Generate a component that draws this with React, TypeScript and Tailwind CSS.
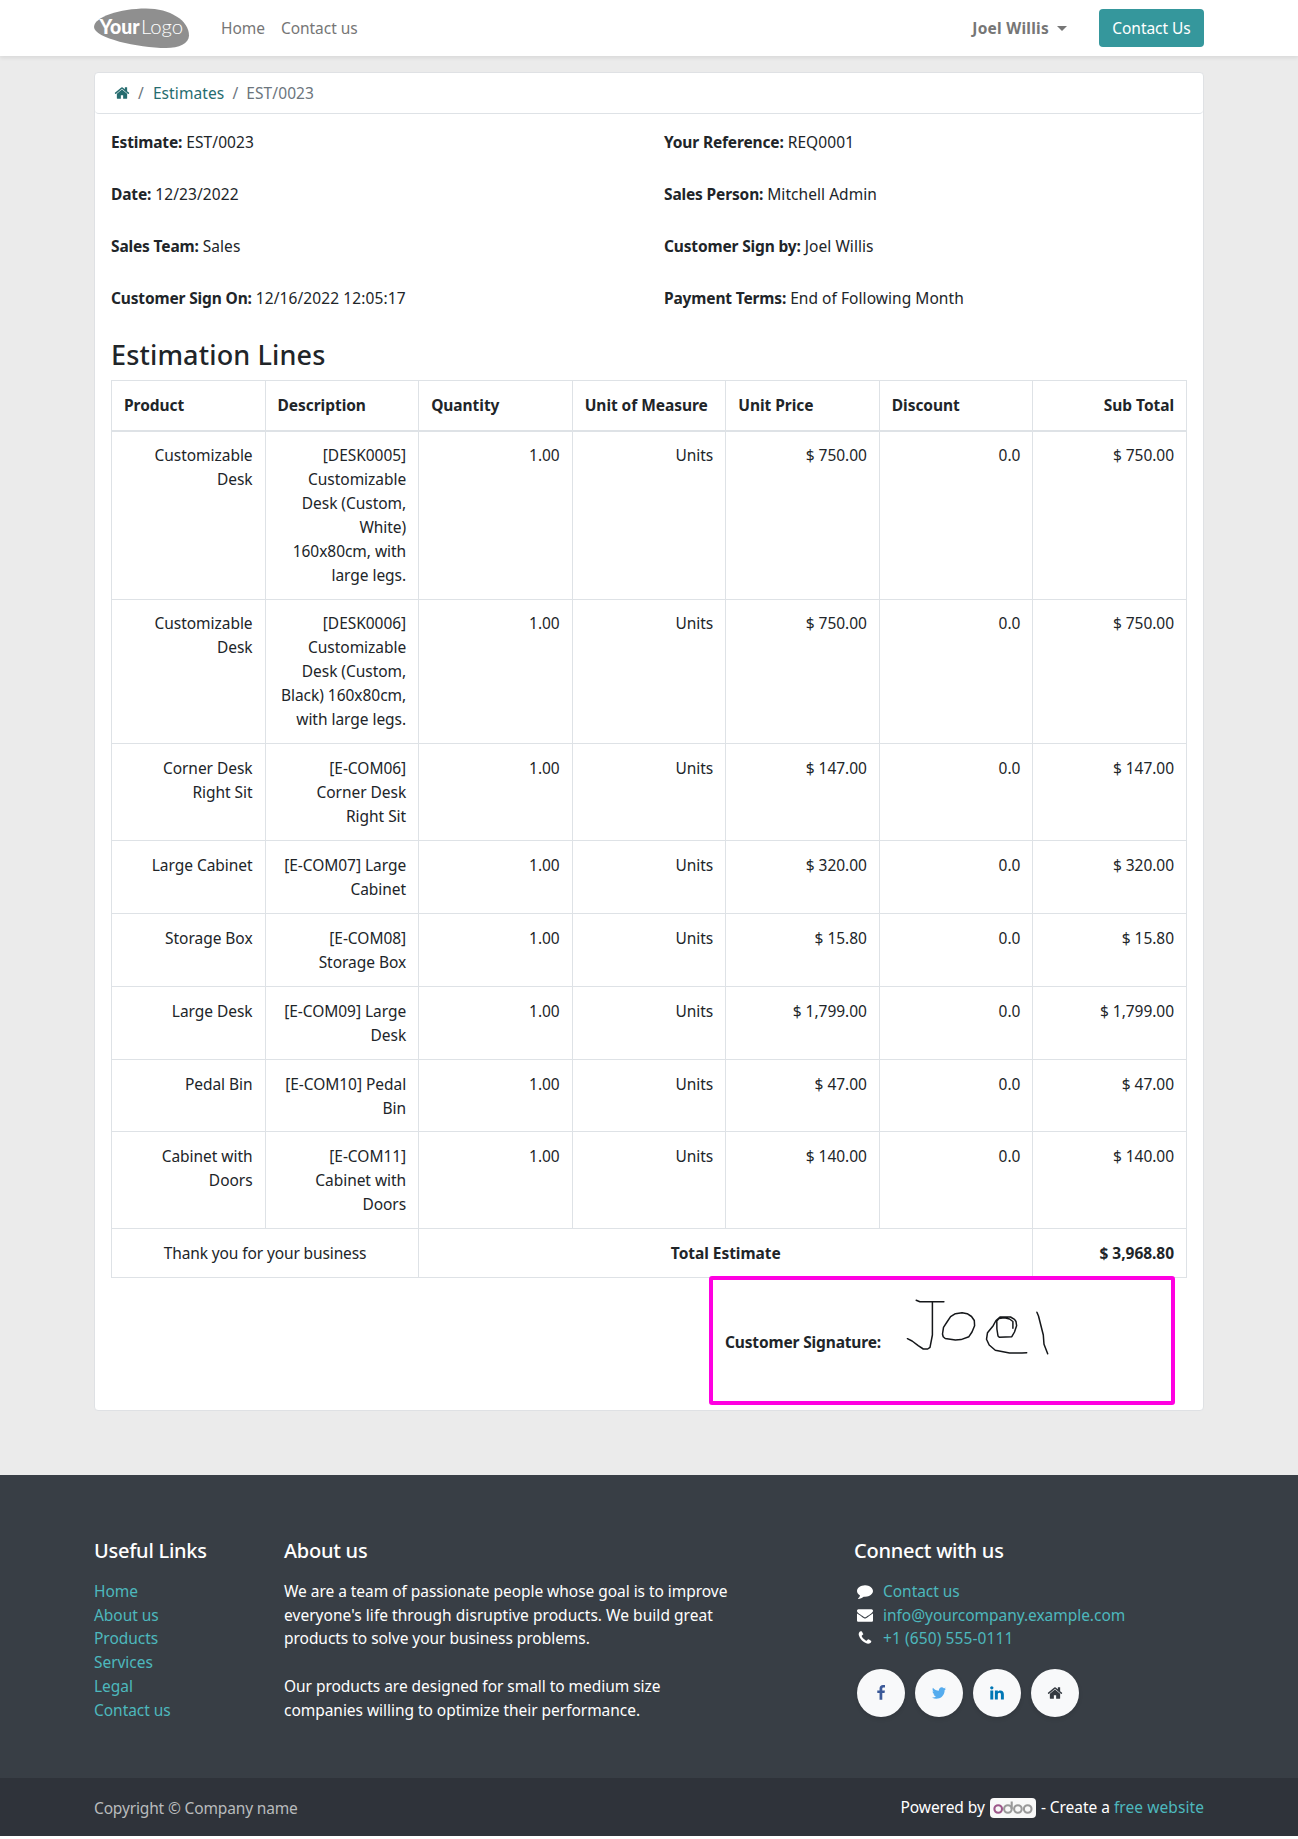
import React from "react";

const icons = {
  home: "M1472 992v480q0 26-19 45t-45 19h-384v-384h-256v384h-384q-26 0-45-19t-19-45v-480q0-1 .5-3t.5-3l575-474 575 474q1 2 1 6zm223-69l-62 74q-8 9-21 11h-3q-13 0-21-7l-692-577-692 577q-12 8-24 7-13-2-21-11l-62-74q-8-10-7-23.5t11-21.5l719-599q32-26 76-26t76 26l244 204v-195q0-14 9-23t23-9h192q14 0 23 9t9 23v408l219 182q10 8 11 21.5t-7 23.5z",
  comment: "M1792 896q0 174-120 321.5t-326 233-450 85.5q-70 0-145-8-198 175-460 242-49 14-114 22-17 2-30.5-9t-17.5-29v-1q-3-4-.5-12t2-10 4.5-9.5l6-9 7-8.5 8-9q7-8 31-34.5t34.5-38 31-39.5 32.5-51 27-59 26-76q-157-89-247.5-220t-90.5-281q0-130 71-248.5t191-204.5 286-136.5 348-50.5q244 0 450 85.5t326 233 120 321.5z",
  envelope: "M1792 710v794q0 66-47 113t-113 47h-1472q-66 0-113-47t-47-113v-794q44 49 101 87 362 246 497 345 57 42 92.5 65.5t94.5 48 110 24.5h2q51 0 110-24.5t94.5-48 92.5-65.5q170-123 498-345 57-39 100-87zm0-294q0 79-49 151t-122 123q-376 261-468 325-10 7-42.5 30.5t-54 38-52 32.5-57.5 27-50 9h-2q-23 0-50-9t-57.5-27-52-32.5-54-38-42.5-30.5q-91-64-262-182.5t-205-142.5q-62-42-117-115.5t-55-136.5q0-78 41.5-130t118.5-52h1472q65 0 112.5 47t47.5 113z",
  phone: "M1600 1240q0 27-10 70.5t-21 68.5q-21 50-122 106-94 51-186 51-27 0-52.500-3.500t-57.500-12.500-47.500-14.500-55.500-20.500-49-18q-98-35-175-83-128-79-264.500-215.500t-215.500-264.500q-48-77-83-175-3-9-18-49t-20.500-55.500-14.500-47.500-12.500-57.500-3.500-52.500q0-92 51-186 56-101 106-122 25-11 68.500-21t70.500-10q14 0 21 3 18 6 53 76 11 19 30 54t35 63.500 31 53.500q3 4 17.500 25t21.500 35.500 7 28.500q0 20-28.500 50t-62 55-62 53-28.500 46q0 9 5 22.500t8.500 20.500 14 24 11.500 19q76 137 174 235t235 174q2 1 19 11.500t24 14 20.500 8.500 22.500 5q18 0 46-28.500t53-62 55-62 50-28.500q14 0 28.500 7t35.500 21.500 25 17.500q25 15 53.500 31t63.500 35 54 30q70 35 76 53 3 7 3 21z",
  facebook: "M1343 12v264h-157q-86 0-116 36t-30 108v189h293l-39 296h-254v759h-306v-759h-255v-296h255v-218q0-186 104-288.5t277-102.5q147 0 228 12z",
  twitter: "M1684 408q-67 98-162 167 1 14 1 42 0 130-38 259.5t-115.5 248.5-184.5 210.5-258 146-323 54.5q-271 0-496-145 35 4 78 4 225 0 401-138-105-2-188-64.5t-114-159.5q33 5 61 5 43 0 85-11-112-23-185.5-111.5t-73.5-205.5v-4q68 38 146 41-66-44-105-115t-39-154q0-88 44-163 121 149 294.500 238.500t371.500 99.500q-8-38-8-74 0-134 94.500-228.500t228.500-94.500q140 0 236 102 109-21 205-78-37 115-142 178 93-10 186-50z",
  linkedin: "M477 625v991h-330v-991h330zm21-306q1 73-50.5 122t-135.5 49h-2q-82 0-132-49t-50-122q0-74 51.5-122.5t134.5-48.5 133 48.5 51 122.5zm1166 729v568h-329v-530q0-105-40.5-164.5t-126.5-59.5q-63 0-105.5 34.5t-63.5 85.5q-11 30-11 81v553h-329q2-399 2-647t-1-296l-1-48h329v144h-2q20-32 41-56t56.5-52 87-43.5 114.5-15.5q171 0 275 113.5t104 332.5z",
};

function Icon({ name, className = "" }: { name: keyof typeof icons; className?: string }) {
  return (
    <svg viewBox="0 0 1792 1792" fill="currentColor" className={`size-4 shrink-0 ${className}`}>
      <path d={icons[name]} />
    </svg>
  );
}

const rows = [
  { h: "h-[169px] [&>td]:pt-[11px]", p: ["Customizable", "Desk"], d: ["[DESK0005]", "Customizable", "Desk (Custom,", "White)", "160x80cm, with", "large legs."], price: "$ 750.00" },
  { h: "h-[144px] [&>td]:pt-[11px]", p: ["Customizable", "Desk"], d: ["[DESK0006]", "Customizable", "Desk (Custom,", "Black) 160x80cm,", "with large legs."], price: "$ 750.00" },
  { h: "h-[97px] [&>td]:pt-3", p: ["Corner Desk", "Right Sit"], d: ["[E-COM06]", "Corner Desk", "Right Sit"], price: "$ 147.00" },
  { h: "h-[73px] [&>td]:pt-3", p: ["Large Cabinet"], d: ["[E-COM07] Large", "Cabinet"], price: "$ 320.00" },
  { h: "h-[73px] [&>td]:pt-3", p: ["Storage Box"], d: ["[E-COM08]", "Storage Box"], price: "$ 15.80" },
  { h: "h-[73px] [&>td]:pt-3", p: ["Large Desk"], d: ["[E-COM09] Large", "Desk"], price: "$ 1,799.00" },
  { h: "h-[72px] [&>td]:pt-3", p: ["Pedal Bin"], d: ["[E-COM10] Pedal", "Bin"], price: "$ 47.00" },
  { h: "h-[97px] [&>td]:pt-3", p: ["Cabinet with", "Doors"], d: ["[E-COM11]", "Cabinet with", "Doors"], price: "$ 140.00" },
];
const heads = ["Product", "Description", "Quantity", "Unit of Measure", "Unit Price", "Discount", "Sub Total"];
const info = [
  ["Estimate:", "EST/0023", "Your Reference:", "REQ0001"],
  ["Date:", "12/23/2022", "Sales Person:", "Mitchell Admin"],
  ["Sales Team:", "Sales", "Customer Sign by:", "Joel Willis"],
  ["Customer Sign On:", "12/16/2022 12:05:17", "Payment Terms:", "End of Following Month"],
];
const contacts = [
  { icon: "comment", text: "Contact us", h: "h-6" },
  { icon: "envelope", text: "info@yourcompany.example.com", h: "h-[23px]" },
  { icon: "phone", text: "+1 (650) 555-0111", h: "h-6 tracking-[0.1px]" },
] as const;
const socials = [
  { icon: "facebook", color: "text-[#3b5998]" },
  { icon: "twitter", color: "text-[#55acee]" },
  { icon: "linkedin", color: "text-[#0077b5]" },
  { icon: "home", color: "text-[#343a40]" },
] as const;

function Lines({ items }: { items: string[] }) {
  return <>{items.map((t) => <div key={t}>{t}</div>)}</>;
}

function FooterTitle({ children }: { children: string }) {
  return <h5 className="mb-4 text-[20px] font-medium leading-6 tracking-[-0.25px]">{children}</h5>;
}

function Value({ text }: { text: string }) {
  return <span className={/\d{2}/.test(text) ? "tracking-[0.1px]" : "tracking-[0.05px]"}>{text}</span>;
}

export default function App() {
  return (
    <div className="h-[1839px] w-[1298px] overflow-hidden whitespace-nowrap bg-white font-['Noto_Sans',sans-serif] text-[15.5px] leading-6 tracking-[-0.04px] text-[#212529]">
      <div className="h-[1475px] bg-[#ebebeb]">
        <header className="relative flex h-14 items-center bg-white px-[94px] text-[#767676] shadow-[0_2px_4px_rgba(0,0,0,0.08)]">
          <svg width="96" height="41" viewBox="0 0 96 41">
            <path d="M0 19C0 9 26 0.500 52 0.500c24 0 43 12 43 27 0 8-10 12.500-23 12.500C44 40 0 30 0 19Z" fill="#8f8f8f" />
            <text x="5.500" y="26" fill="#fff" fontFamily="Lato" fontWeight="900" fontSize="20.5" textLength="40" lengthAdjust="spacingAndGlyphs">Your</text>
            <text x="47" y="26" fill="#fff" fontFamily="Lato" fontWeight="300" fontSize="20.5" textLength="42" lengthAdjust="spacingAndGlyphs">Logo</text>
          </svg>
          <span className="ml-[31px]">Home</span>
          <span className="ml-4 tracking-[-0.05px]">Contact us</span>
          <span className="ml-auto font-bold tracking-[0.25px]">Joel Willis</span>
          <span className="ml-2 mr-8 border-x-[5px] border-t-[5px] border-x-transparent border-t-[#767676]" />
          <span className="flex h-[38px] w-[105px] items-center justify-center rounded bg-[#35979c] text-white">Contact Us</span>
        </header>
        <main className="mx-auto mt-4 h-[1339px] w-[1110px] rounded border border-[#dfe1e4] bg-white">
          <nav className="flex h-[41px] items-center rounded border-b border-[#dee2e6] pl-[19px] tracking-[0.1px] text-[#6c757d]">
            <Icon name="home" className="text-[#266c6f]" />
            <span className="ml-2">/</span>
            <span className="ml-[9px] text-[#266c6f]">Estimates</span>
            <span className="ml-2">/</span>
            <span className="ml-2">EST/0023</span>
          </nav>
          <section className="px-4">
            <div className="grid grid-cols-[553px_1fr] gap-y-7 pt-4">
              {info.map(([a, b, c, d]) => (
                <React.Fragment key={a}>
                  <div><b className="tracking-[-0.15px]">{a}</b> <Value text={b} /></div>
                  <div><b className="tracking-[-0.15px]">{c}</b> <Value text={d} /></div>
                </React.Fragment>
              ))}
            </div>
            <h3 className="mt-7 mb-2 h-[34px] text-[27px] font-medium leading-[34px] tracking-[0.15px]">Estimation Lines</h3>
            <table className="w-[1076px] table-fixed border-collapse [&_td]:border [&_td]:border-[#dee2e6] [&_td]:px-3 [&_td]:align-top [&_th]:border [&_th]:border-[#dee2e6] [&_th]:px-3">
              <thead>
                <tr className="h-[50px] border-b-2 border-[#dee2e6] tracking-[-0.05px]">
                  {heads.map((h, i) => <th key={h} className={i === 6 ? "text-right" : "text-left"}>{h}</th>)}
                </tr>
              </thead>
              <tbody className="text-right">
                {rows.map((r) => (
                  <tr key={r.d[0]} className={r.h}>
                    <td><Lines items={r.p} /></td>
                    <td><Lines items={r.d} /></td>
                    <td>1.00</td>
                    <td>Units</td>
                    <td>{r.price}</td>
                    <td>0.0</td>
                    <td>{r.price}</td>
                  </tr>
                ))}
                <tr className="h-[49px] text-center [&>td]:pt-3">
                  <td colSpan={2} className="tracking-[-0.12px]">Thank you for your business</td>
                  <td colSpan={4} className="font-bold">Total Estimate</td>
                  <td className="text-right font-bold">$ 3,968.80</td>
                </tr>
              </tbody>
            </table>
            <div className="relative -mt-0.5 ml-[598px] h-[129px] w-[466px] rounded-[3px] border-4 border-[#ff00e1] pl-3">
              <b className="mt-[50px] block tracking-[-0.15px]">Customer Signature:</b>
              <svg className="absolute left-[190px] top-[13px]" width="160" height="70" viewBox="903 1293 160 70" fill="none" stroke="#15171a" strokeWidth="1.5" strokeLinecap="round" strokeLinejoin="round">
                <path d="M916.200 1300.300L919.900 1301.700H943.900M932.400 1301.700V1335L930 1347.300L927.700 1349H923.300L918.200 1345.700L912.100 1341L907.400 1338.700" />
                <path d="M967.200 1313.700L962.100 1312.700L955.400 1313.700L950.600 1316.700L947 1322L943.500 1327.300L942.500 1334L943.200 1336.700L945.200 1338.500L955.400 1340L961 1339.600L968.900 1336.700L972 1332L974.600 1325.700L974.300 1320.500L971.500 1316.500L967.200 1313.700" />
                <path d="M1012.900 1328.300V1321.500L1009.500 1319L1004.400 1317.800L999 1318.500L996.800 1321L996.900 1329L998 1336L999.300 1337.300L1011.800 1336.700L1014.500 1332L1016.600 1325.700L1016 1321.500L1014.500 1319.300L1010.500 1317H1000L996 1320.500L993.200 1325.700L987.500 1332.700L986.500 1339.300L989.200 1345L995.300 1350.300L1009.500 1353H1022L1026.700 1352.700" />
                <path d="M1036.900 1312.300L1038.500 1316L1043.300 1335L1044 1344.300L1047.700 1353.700" />
              </svg>
            </div>
          </section>
        </main>
      </div>
      <footer className="h-[303px] bg-[#383e45] px-[94px] text-white">
        <div className="grid grid-cols-[190px_570px_1fr] pt-16">
          <div>
            <FooterTitle>Useful Links</FooterTitle>
            <div className="text-[#4db8bd] [&>div:nth-child(2)]:h-[23px]">
              <Lines items={["Home", "About us", "Products", "Services", "Legal", "Contact us"]} />
            </div>
          </div>
          <div>
            <FooterTitle>About us</FooterTitle>
            <div>We are a team of passionate people whose goal is to improve</div>
            <div className="h-[23px] tracking-[0.04px]">everyone's life through disruptive products. We build great</div>
            <div>products to solve your business problems.</div>
            <div className="mt-6">Our products are designed for small to medium size</div>
            <div>companies willing to optimize their performance.</div>
          </div>
          <div>
            <FooterTitle>Connect with us</FooterTitle>
            {contacts.map((c) => (
              <div key={c.icon} className={`flex items-center ${c.h}`}>
                <span className="mr-2 flex w-[21px] justify-center"><Icon name={c.icon} /></span>
                <span className="text-[#4db8bd]">{c.text}</span>
              </div>
            ))}
            <div className="ml-[3px] mt-[19px] flex gap-2.5">
              {socials.map((s) => (
                <span key={s.icon} className={`flex size-12 items-center justify-center rounded-full bg-[#f8f9fa] shadow-[0_2px_4px_rgba(0,0,0,0.12)] ${s.color}`}>
                  <Icon name={s.icon} />
                </span>
              ))}
            </div>
          </div>
        </div>
      </footer>
      <div className="flex h-[58px] items-center justify-between bg-[#2f333a] px-[94px] text-[#b9bbbd]">
        <span className="pt-0.5 tracking-[-0.15px]">Copyright © Company name</span>
        <span className="flex items-center text-white">
          Powered by
          <span className="ml-[5px] mr-[5px] mt-0.5 flex h-5 w-[46px] items-center justify-center rounded bg-[#f8f8f8]">
            <svg width="40" height="14" viewBox="0 0 40 14" fill="none" stroke="#999" strokeWidth="2.100">
              <circle cx="5.200" cy="8" r="3.800" stroke="#9c5789" />
              <circle cx="14.900" cy="8" r="3.800" />
              <path d="M18.700 8V0.500" />
              <circle cx="24.900" cy="8" r="3.800" />
              <circle cx="34.700" cy="8" r="3.800" />
            </svg>
          </span>
          - Create a&nbsp;<span className="tracking-[0.08px] text-[#4db8bd]">free website</span>
        </span>
      </div>
    </div>
  );
}
